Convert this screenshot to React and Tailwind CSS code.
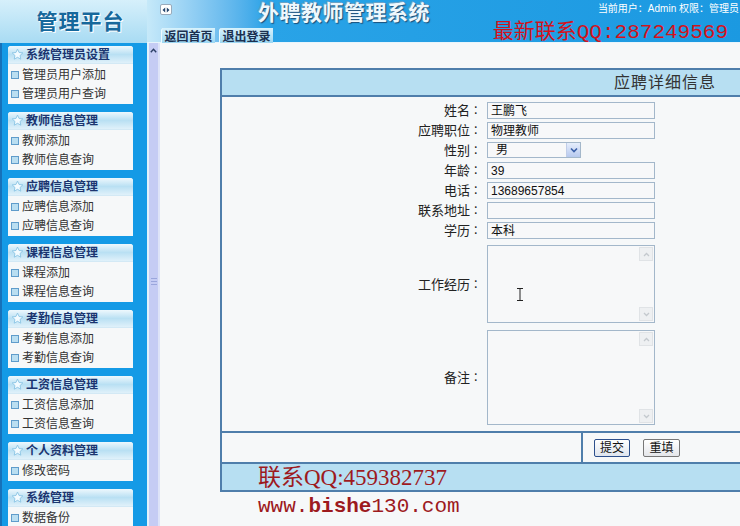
import React from 'react';

const menus = [
  { title: '系统管理员设置', items: ['管理员用户添加', '管理员用户查询'] },
  { title: '教师信息管理', items: ['教师添加', '教师信息查询'] },
  { title: '应聘信息管理', items: ['应聘信息添加', '应聘信息查询'] },
  { title: '课程信息管理', items: ['课程添加', '课程信息查询'] },
  { title: '考勤信息管理', items: ['考勤信息添加', '考勤信息查询'] },
  { title: '工资信息管理', items: ['工资信息添加', '工资信息查询'] },
  { title: '个人资料管理', items: ['修改密码'] },
  { title: '系统管理', items: ['数据备份'] },
];

const fields = [
  { label: '姓名', value: '王鹏飞' },
  { label: '应聘职位', value: '物理教师' },
  { label: '性别', value: '男', select: true },
  { label: '年龄', value: '39' },
  { label: '电话', value: '13689657854' },
  { label: '联系地址', value: '' },
  { label: '学历', value: '本科' },
];

function StarIcon() {
  return (
    <svg width="13" height="13" viewBox="0 0 24 24">
      <path
        d="M12 2l2.9 6.3 6.9.8-5.1 4.7 1.4 6.8L12 17.2l-6.1 3.4 1.4-6.8L2.2 9.1l6.9-.8z"
        fill="#f3fbff"
        stroke="#86c3e3"
        strokeWidth="1.6"
        strokeLinejoin="round"
      />
    </svg>
  );
}

function MenuPanel({ title, items }) {
  return (
    <div className="w-[125px] shrink-0 rounded-t-[3px] bg-[#f6f8f9] overflow-hidden">
      <div className="h-[18px] flex items-center gap-[2px] pl-[3px] bg-linear-to-b from-[#eef8fd] via-[#b9e0f3] to-[#e0f1fa] border-b border-[#d3e9f5]">
        <StarIcon />
        <span className="text-[12px] font-bold text-[#1b3570] leading-none">{title}</span>
      </div>
      <div className="py-[1px]">
        {items.map(it => (
          <div key={it} className="h-[19px] flex items-center gap-[3px] pl-[3px]">
            <span className="w-[8px] h-[8px] border border-[#5f9ccb] bg-[#b9def1] shrink-0" />
            <span className="text-[12px] text-[#333] leading-none">{it}</span>
          </div>
        ))}
      </div>
    </div>
  );
}

function TextBox({ value }) {
  return (
    <div className="h-[17px] w-[168px] border border-[#a3b7ca] bg-[#f7f8f9] px-[3px] flex items-center text-[12px] text-[#111] leading-none">
      {value}
    </div>
  );
}

function SelectBox({ value }) {
  return (
    <div className="h-[16px] w-[94px] border border-[#a3b7ca] bg-[#f7f8f9] flex items-center text-[12px] text-[#111] leading-none">
      <span className="flex-1 pl-[8px]">{value}</span>
      <span className="w-[14px] h-[14px] bg-linear-to-b from-[#e6eefc] to-[#b7c9ee] border-l border-[#c0cde8] flex items-center justify-center">
        <svg width="8" height="6" viewBox="0 0 8 6">
          <path d="M1 1.5l3 3 3-3" fill="none" stroke="#3a5fa8" strokeWidth="1.6" />
        </svg>
      </span>
    </div>
  );
}

function TextArea({ height, children }) {
  return (
    <div className={`relative w-[168px] ${height} border border-[#a3b7ca] bg-[#f7f8f9] flex`}>
      <div className="flex-1" />
      <div className="w-[15px] flex flex-col justify-between py-[1px] pr-[1px]">
        <span className="h-[14px] bg-[#eef0f2] border border-[#e0e3e6] flex items-center justify-center">
          <svg width="7" height="5" viewBox="0 0 7 5">
            <path d="M1 4l2.5-2.5L6 4" fill="none" stroke="#c4c9ce" strokeWidth="1.3" />
          </svg>
        </span>
        <span className="h-[14px] bg-[#eef0f2] border border-[#e0e3e6] flex items-center justify-center">
          <svg width="7" height="5" viewBox="0 0 7 5">
            <path d="M1 1l2.5 2.5L6 1" fill="none" stroke="#c4c9ce" strokeWidth="1.3" />
          </svg>
        </span>
      </div>
      {children}
    </div>
  );
}

export default function App() {
  return (
    <div className="w-[740px] h-[526px] overflow-hidden flex font-['Liberation_Sans','Noto_Sans_CJK_SC',sans-serif] bg-[#f6f8f9]">
      {/* left navigation */}
      <div className="w-[147px] shrink-0 flex flex-col">
        <div className="h-[43px] shrink-0 bg-linear-to-b from-[#d6f0fb] to-[#a8dbf3] flex items-center justify-center pl-[14px]">
          <span className="text-[21px] font-bold text-[#16689c] tracking-[1px] [text-shadow:0_0_2px_#ffffff,1px_1px_0_#ffffff]">
            管理平台
          </span>
        </div>
        <div className="flex-1 min-h-0 overflow-hidden bg-[#149ae6] border-l-2 border-[#1671b9] pl-[6px] pt-[3px] flex flex-col gap-[8px]">
          {menus.map(m => (
            <MenuPanel key={m.title} title={m.title} items={m.items} />
          ))}
        </div>
      </div>

      {/* right side */}
      <div className="flex-1 flex flex-col">
        <header className="h-[43px] shrink-0 flex flex-col bg-linear-to-r from-[#c6e9f9] from-0% via-[#29a3e7] via-20% to-[#1b99e1] border-b border-[#e8f5fc]">
          <div className="h-[25px] flex items-start">
            <span className="ml-[13px] mt-[4px] w-[12px] h-[11px] bg-white border border-[#9ab] rounded-[2px] flex items-center justify-center">
              <svg width="8" height="6" viewBox="0 0 8 6">
                <path d="M0.5 3L3.2 0.5v5z M7.5 3L4.8 0.5v5z" fill="#26466e" />
              </svg>
            </span>
            <span className="ml-[86px] text-[21px] leading-[25px] font-bold text-[#eef8fd] tracking-[0.5px] [text-shadow:1px_1px_1px_#1b4f7a,-1px_-1px_0_#6aa2c6]">
              外聘教师管理系统
            </span>
            <span className="ml-auto mr-[3px] mt-[3px] text-[10px] leading-[12px] text-white">
              当前用户：Admin 权限：管理员
            </span>
          </div>
          <div className="flex-1 flex items-end">
            <div className="ml-[14px] flex gap-[4px]">
              {['返回首页', '退出登录'].map(t => (
                <span
                  key={t}
                  className="h-[17px] w-[54px] rounded-tl-[3px] bg-linear-to-b from-[#d8f2fc] to-[#93d3f1] border-l border-[#eefaff] flex items-center justify-center text-[12px] font-bold text-[#1b3050] leading-none"
                >
                  {t}
                </span>
              ))}
            </div>
            <span className="ml-auto mr-[14px] -mt-[6px] self-start text-[21px] leading-[24px] text-[#d3121c] font-['Liberation_Serif','Noto_Sans_CJK_SC',serif] whitespace-nowrap">
              最新联系<span className="font-['Liberation_Mono',monospace]">QQ:287249569</span>
            </span>
          </div>
        </header>

        <div className="flex-1 flex min-h-0">
          {/* frame scrollbar */}
          <div className="w-[13px] shrink-0 bg-[#c5ccf4] border-l-2 border-[#e3f2fb] border-r-2 border-r-[#dde3f8] flex flex-col items-center">
            <svg className="mt-[5px]" width="7" height="5" viewBox="0 0 7 5">
              <path d="M0.8 4.2l2.7-3 2.7 3" fill="none" stroke="#2c3f66" strokeWidth="1.4" />
            </svg>
            <div className="mt-[225px] flex flex-col gap-[2px]">
              <span className="w-[6px] h-px bg-[#9aa6dc]" />
              <span className="w-[6px] h-px bg-[#9aa6dc]" />
              <span className="w-[6px] h-px bg-[#9aa6dc]" />
            </div>
          </div>

          <main className="flex-1 bg-[#f6f8f9] pl-[60px] pt-[25px] overflow-hidden">
            <div className="w-[522px] border-2 border-[#4f7eab]">
              <div className="h-[27px] bg-[#b7dff2] border-b-2 border-[#4f7eab] flex items-center justify-end pr-[24px] text-[16px] tracking-[1px] text-[#333]">
                应聘详细信息
              </div>

              <div className="pt-[5px] pb-[6px] text-[#222]">
                {fields.map(f => (
                  <div key={f.label} className="h-[20px] grid grid-cols-[248px_17px_1fr] items-start">
                    <div className="h-[17px] flex items-center justify-end text-[13px] leading-none">{f.label}</div>
                    <div className="h-[17px] flex items-center justify-center text-[11px] leading-none">：</div>
                    {f.select ? <SelectBox value={f.value} /> : <TextBox value={f.value} />}
                  </div>
                ))}

                <div className="mt-[3px] grid grid-cols-[248px_17px_1fr] items-center">
                  <div className="flex justify-end text-[13px] leading-none">工作经历</div>
                  <div className="flex justify-center text-[11px] leading-none">：</div>
                  <TextArea height="h-[78px]">
                    <svg className="absolute left-[28px] top-[42px]" width="8" height="13" viewBox="0 0 8 13">
                      <path d="M1 0.5h6M1 12.5h6M4 0.5v12" fill="none" stroke="#222" strokeWidth="1" />
                    </svg>
                  </TextArea>
                </div>

                <div className="mt-[7px] grid grid-cols-[248px_17px_1fr] items-center">
                  <div className="flex justify-end text-[13px] leading-none">备注</div>
                  <div className="flex justify-center text-[11px] leading-none">：</div>
                  <TextArea height="h-[95px]" />
                </div>
              </div>

              <div className="h-[31px] border-t-2 border-[#4f7eab] flex">
                <div className="w-[361px] border-r-2 border-[#4f7eab]" />
                <div className="flex items-center gap-[13px] pl-[11px]">
                  <button className="w-[36px] h-[18px] rounded-[2px] border border-[#2c4f8c] bg-linear-to-b from-white to-[#dfe5ee] text-[12px] leading-none text-[#111]">
                    提交
                  </button>
                  <button className="w-[37px] h-[18px] rounded-[2px] border border-[#777] bg-linear-to-b from-white to-[#e4e6ea] text-[12px] leading-none text-[#111]">
                    重填
                  </button>
                </div>
              </div>

              <div className="h-[28px] border-t-2 border-[#4f7eab] bg-[#b7dff2] pl-[36px] flex items-center">
                <span className="text-[23px] leading-none text-[#9d1a1e] font-['Liberation_Serif','Noto_Sans_CJK_SC',serif] whitespace-nowrap">
                  联系QQ:459382737
                </span>
              </div>
            </div>

            <div className="ml-[38px] mt-[3px] text-[21px] leading-[24px] text-[#9d1a1e] font-['Liberation_Mono',monospace] whitespace-nowrap">
              www.<span className="font-bold">bishe</span>130.com
            </div>
          </main>
        </div>
      </div>
    </div>
  );
}
